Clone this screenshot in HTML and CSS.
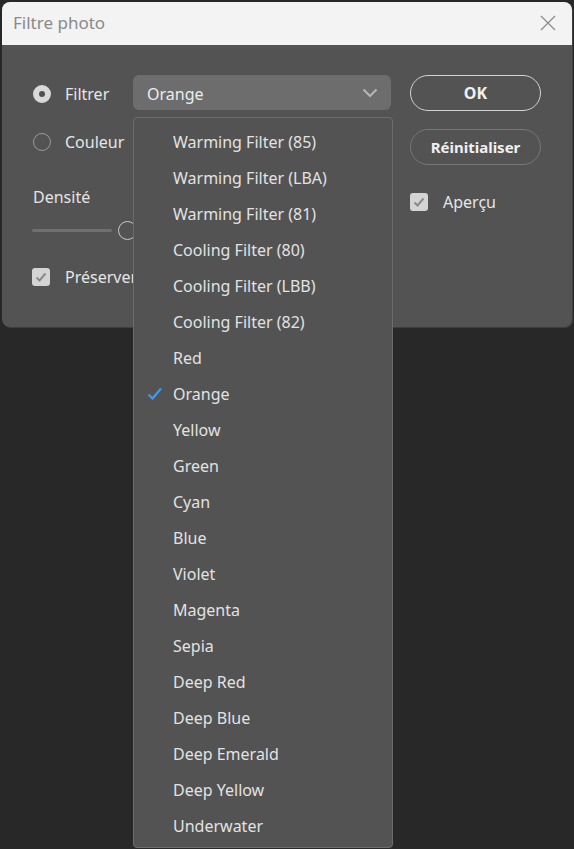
FILE: index.html
```html
<!DOCTYPE html>
<html lang="fr">
<head>
<meta charset="utf-8">
<title>Filtre photo</title>
<link rel="stylesheet" href="styles.css">
</head>
<body>
<div class="window">
  <div class="titlebar">
    <span class="title">Filtre photo</span>
    <svg class="close" width="16" height="16" viewBox="0 0 16 16"><path d="M1 1L15 15M15 1L1 15" stroke="#8c8c8c" stroke-width="1.3" fill="none"/></svg>
  </div>
  <div class="content">
    <div class="col-left">
      <div class="row row-filter">
        <span class="radio radio-on"></span><span class="label">Filtrer</span>
      </div>
      <div class="row row-color">
        <span class="radio"></span><span class="label">Couleur</span>
      </div>
      <div class="density">Densité</div>
      <div class="slider"><span class="track"></span><span class="thumb"></span></div>
      <div class="row row-preserve">
        <span class="checkbox"><svg width="18" height="18" viewBox="0 0 18 18"><path d="M4.5 9.5L7.5 12.5L13.5 5.5" stroke="#8a8a8a" stroke-width="2" fill="none"/></svg></span><span class="label">Préserver la luminosité</span>
      </div>
    </div>
    <div class="col-mid">
      <div class="select">
        <span class="select-value">Orange</span>
        <svg class="chevron" width="16" height="10" viewBox="0 0 16 10"><path d="M1.5 1.5L8 8L14.5 1.5" stroke="#b4b4b4" stroke-width="2.2" fill="none"/></svg>
      </div>
      <ul class="menu">
        <li>Warming Filter (85)</li>
        <li>Warming Filter (LBA)</li>
        <li>Warming Filter (81)</li>
        <li>Cooling Filter (80)</li>
        <li>Cooling Filter (LBB)</li>
        <li>Cooling Filter (82)</li>
        <li>Red</li>
        <li class="checked"><svg class="check" width="16" height="14" viewBox="0 0 16 14"><path d="M1.5 7.5L5.5 11.5L14 1.5" stroke="#3f97f2" stroke-width="2.3" fill="none"/></svg>Orange</li>
        <li>Yellow</li>
        <li>Green</li>
        <li>Cyan</li>
        <li>Blue</li>
        <li>Violet</li>
        <li>Magenta</li>
        <li>Sepia</li>
        <li>Deep Red</li>
        <li>Deep Blue</li>
        <li>Deep Emerald</li>
        <li>Deep Yellow</li>
        <li>Underwater</li>
      </ul>
    </div>
    <div class="col-right">
      <button class="btn btn-primary">OK</button>
      <button class="btn btn-secondary">Réinitialiser</button>
      <div class="row row-preview">
        <span class="checkbox"><svg width="18" height="18" viewBox="0 0 18 18"><path d="M4.5 9.5L7.5 12.5L13.5 5.5" stroke="#8a8a8a" stroke-width="2" fill="none"/></svg></span><span class="label">Aperçu</span>
      </div>
    </div>
  </div>
</div>
</body>
</html>
```
FILE: styles.css
```css
html, body {
  margin: 0;
  padding: 0;
}
body {
  background: #282828;
  font-family: "Noto Sans", "Open Sans", sans-serif;
  font-size: 16px;
  color: #e4e4e4;
  height: 849px;
  overflow: hidden;
}
.window {
  margin: 2px 2px 0 2px;
  width: 570px;
  height: 325px;
  background: #535353;
  border-radius: 8px;
  box-shadow: 1px 1px 0 #3e3e3e;
}
.titlebar {
  height: 43px;
  background: #f3f3f3;
  border-radius: 8px 8px 0 0;
  display: flex;
  align-items: center;
  justify-content: space-between;
  padding: 0 16px 0 11px;
}
.title {
  color: #8a8a8a;
  font-size: 17px;
  margin-top: -2px;
}
.close {
  margin-top: -2px;
}
.content {
  display: flex;
  padding: 30px 0 0 30px;
}
.col-left {
  width: 101px;
  display: flex;
  flex-direction: column;
  overflow: hidden;
  height: 250px;
}
.row {
  display: flex;
  align-items: center;
  white-space: nowrap;
}
.row-filter, .row-color {
  height: 36px;
  padding-left: 1px;
}
.row-filter {
  margin-top: 1px;
}
.row-color {
  margin-top: 12px;
}
.radio {
  width: 18px;
  height: 18px;
  box-sizing: border-box;
  border-radius: 50%;
  border: 1.5px solid #9a9a9a;
  margin-right: 14px;
  flex: none;
}
.radio-on {
  border: 6px solid #d9d9d9;
  background: #505050;
}
.label {
  color: #e6e6e6;
}
.density {
  margin-top: 26px;
  height: 22px;
  line-height: 22px;
  padding-left: 1px;
}
.slider {
  margin-top: 12px;
  height: 20px;
  display: flex;
  align-items: center;
  flex: none;
}
.track {
  width: 80px;
  height: 3px;
  background: #707070;
  border-radius: 2px;
  flex: none;
}
.thumb {
  width: 19px;
  height: 19px;
  box-sizing: border-box;
  border-radius: 50%;
  border: 1.5px solid #c8c8c8;
  margin-left: 6px;
  flex: none;
}
.row-preserve {
  margin-top: 27px;
  height: 20px;
  flex: none;
}
.checkbox {
  width: 18px;
  height: 18px;
  border-radius: 3px;
  background: #d4d4d4;
  margin-right: 15px;
  flex: none;
  display: flex;
}
.col-mid {
  position: relative;
  width: 258px;
}
.select {
  height: 35px;
  background: #6d6d6d;
  border-radius: 6px;
  display: flex;
  align-items: center;
  justify-content: space-between;
  padding: 0 13px 0 14px;
}
.select-value {
  color: #ececec;
  margin-top: 2px;
}
.chevron {
  margin-top: 1px;
}
.menu {
  position: absolute;
  left: 0;
  top: 42px;
  width: 260px;
  box-sizing: border-box;
  margin: 0;
  padding: 6px 0 3px 0;
  list-style: none;
  background: #535353;
  border: 1px solid #6c6c6c;
  border-radius: 4px;
  z-index: 5;
}
.menu li {
  height: 36px;
  display: flex;
  align-items: center;
  padding-left: 39px;
  position: relative;
  color: #e2e2e2;
}
.check {
  position: absolute;
  left: 13px;
  top: 11px;
}
.col-right {
  margin-left: 19px;
  width: 131px;
  display: flex;
  flex-direction: column;
}
.btn {
  height: 36px;
  border-radius: 18px;
  background: transparent;
  font-family: inherit;
  font-size: 15px;
  font-weight: 700;
  color: #f0f0f0;
  padding: 0;
  cursor: pointer;
}
.btn-primary {
  border: 1.5px solid #d2d2d2;
  font-size: 16px;
}
.btn-secondary {
  margin-top: 18px;
  border: 1.5px solid #777777;
}
.row-preview {
  margin-top: 28px;
  height: 18px;
}
```
